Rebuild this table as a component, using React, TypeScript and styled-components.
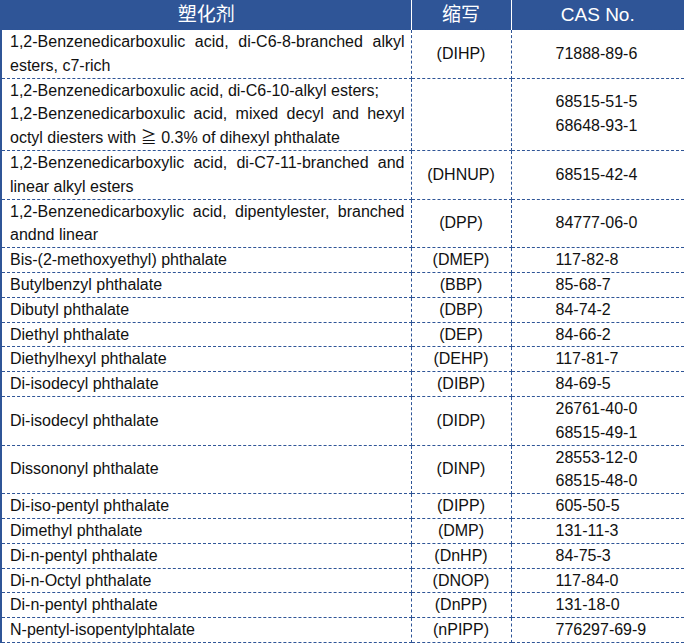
import React from "react";
import styled, { createGlobalStyle } from "styled-components";

const BLUE = "#2f5597";

const GlobalStyle = createGlobalStyle`
  html, body {
    margin: 0;
    padding: 0;
    background: #ffffff;
  }
  body {
    font-family: "Liberation Sans", Arial, "Noto Sans CJK SC", sans-serif;
  }
`;

const Table = styled.table`
  width: 684px;
  border-collapse: collapse;
  table-layout: fixed;
  color: #111;
  font-size: 16px;
`;

const HeadCell = styled.th<{ $last?: boolean }>`
  background: ${BLUE};
  color: #ffffff;
  font-weight: normal;
  font-size: 19px;
  font-family: "Liberation Sans", Arial, "Noto Sans CJK SC", sans-serif;
  line-height: 29px;
  height: 29px;
  padding: 0;
  text-align: center;
  border-right: ${(p) => (p.$last ? "2px solid " + BLUE : "1px solid #ffffff")};
  border-bottom: 1px dashed ${BLUE};
`;

const Cell = styled.td<{ $kind: "name" | "abbr" | "cas" }>`
  padding: ${(p) =>
    p.$kind === "name" ? "0 6px 0 8px" : p.$kind === "cas" ? "0 4px 0 44px" : "0 2px"};
  line-height: 23.8px;
  vertical-align: middle;
  text-align: ${(p) =>
    p.$kind === "name" ? "justify" : p.$kind === "abbr" ? "center" : "left"};
  border-bottom: 1px dashed ${BLUE};
  border-left: ${(p) => (p.$kind === "name" ? "2px solid " + BLUE : "1px dashed " + BLUE)};
  border-right: ${(p) => (p.$kind === "cas" ? "2px solid " + BLUE : "1px dashed " + BLUE)};
`;

const FirstHead = styled(HeadCell)`
  border-left: 2px solid ${BLUE};
`;

const CasLine = styled.div`
  white-space: nowrap;
`;

type Row = { name: string[]; abbr: string; cas: string[] };

const rows: Row[] = [
  {
    name: ["1,2-Benzenedicarboxulic acid, di-C6-8-branched alkyl esters, c7-rich"],
    abbr: "(DIHP)",
    cas: ["71888-89-6"],
  },
  {
    name: [
      "1,2-Benzenedicarboxulic acid, di-C6-10-alkyl esters;",
      "1,2-Benzenedicarboxulic acid, mixed decyl and hexyl octyl diesters with \u2267 0.3% of dihexyl phthalate",
    ],
    abbr: "",
    cas: ["68515-51-5", "68648-93-1"],
  },
  {
    name: ["1,2-Benzenedicarboxylic acid, di-C7-11-branched and linear alkyl esters"],
    abbr: "(DHNUP)",
    cas: ["68515-42-4"],
  },
  {
    name: ["1,2-Benzenedicarboxylic acid, dipentylester, branched andnd linear"],
    abbr: "(DPP)",
    cas: ["84777-06-0"],
  },
  { name: ["Bis-(2-methoxyethyl) phthalate"], abbr: "(DMEP)", cas: ["117-82-8"] },
  { name: ["Butylbenzyl phthalate"], abbr: "(BBP)", cas: ["85-68-7"] },
  { name: ["Dibutyl phthalate"], abbr: "(DBP)", cas: ["84-74-2"] },
  { name: ["Diethyl phthalate"], abbr: "(DEP)", cas: ["84-66-2"] },
  { name: ["Diethylhexyl phthalate"], abbr: "(DEHP)", cas: ["117-81-7"] },
  { name: ["Di-isodecyl phthalate"], abbr: "(DIBP)", cas: ["84-69-5"] },
  { name: ["Di-isodecyl phthalate"], abbr: "(DIDP)", cas: ["26761-40-0", "68515-49-1"] },
  { name: ["Dissononyl phthalate"], abbr: "(DINP)", cas: ["28553-12-0", "68515-48-0"] },
  { name: ["Di-iso-pentyl phthalate"], abbr: "(DIPP)", cas: ["605-50-5"] },
  { name: ["Dimethyl phthalate"], abbr: "(DMP)", cas: ["131-11-3"] },
  { name: ["Di-n-pentyl phthalate"], abbr: "(DnHP)", cas: ["84-75-3"] },
  { name: ["Di-n-Octyl phthalate"], abbr: "(DNOP)", cas: ["117-84-0"] },
  { name: ["Di-n-pentyl phthalate"], abbr: "(DnPP)", cas: ["131-18-0"] },
  { name: ["N-pentyl-isopentylphtalate"], abbr: "(nPIPP)", cas: ["776297-69-9"] },
];

export default function App() {
  return (
    <>
      <GlobalStyle />
      <Table>
        <colgroup>
          <col style={{ width: 410 }} />
          <col style={{ width: 100 }} />
          <col style={{ width: 174 }} />
        </colgroup>
        <thead>
          <tr>
            <FirstHead>塑化剂</FirstHead>
            <HeadCell>缩写</HeadCell>
            <HeadCell $last>CAS No.</HeadCell>
          </tr>
        </thead>
        <tbody>
          {rows.map((r, i) => (
            <tr key={i}>
              <Cell $kind="name">
                {r.name.map((n, j) => (
                  <React.Fragment key={j}>
                    {j > 0 && <br />}
                    {n}
                  </React.Fragment>
                ))}
              </Cell>
              <Cell $kind="abbr">{r.abbr}</Cell>
              <Cell $kind="cas">
                {r.cas.map((c) => (
                  <CasLine key={c}>{c}</CasLine>
                ))}
              </Cell>
            </tr>
          ))}
        </tbody>
      </Table>
    </>
  );
}
